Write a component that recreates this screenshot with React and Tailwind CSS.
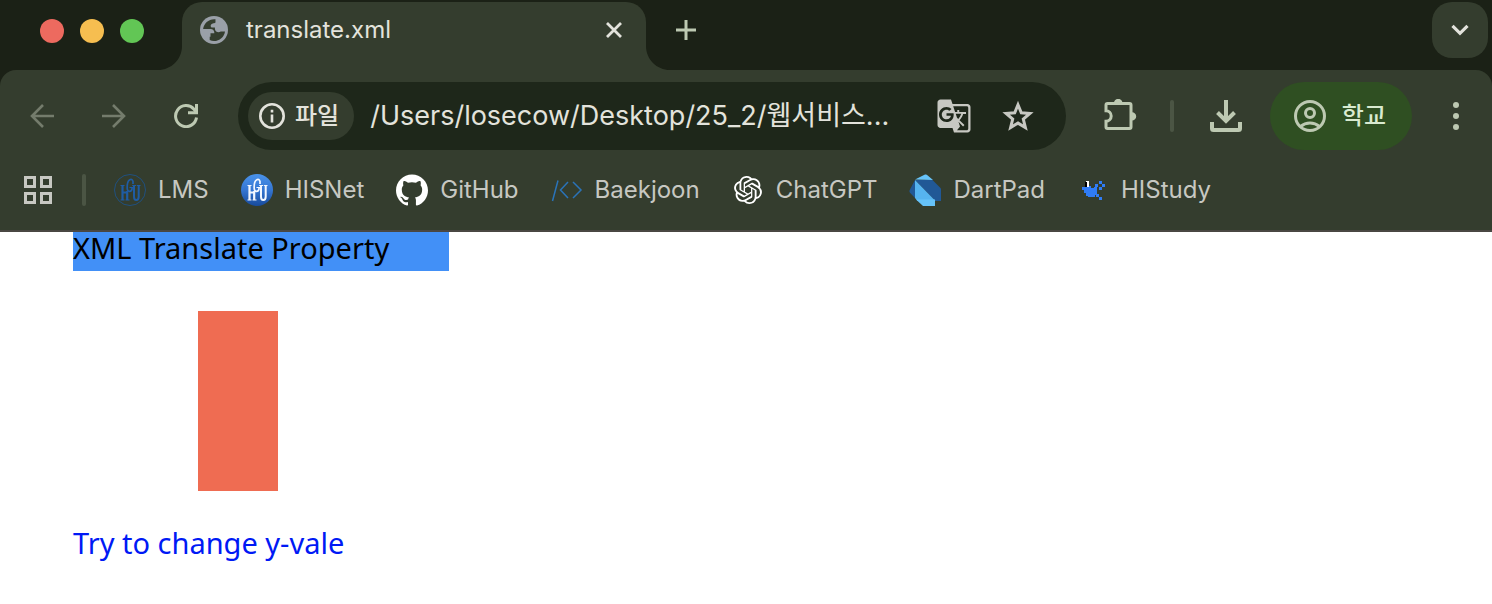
import { useState } from "react";
import { MdGTranslate } from "react-icons/md";
import { SiGithub, SiOpenai } from "react-icons/si";

function TabFoot({ flip }) {
  return (
    <svg
      viewBox="0 0 24 24"
      aria-hidden="true"
      className={
        flip
          ? "absolute bottom-0 left-full h-6 w-6 -scale-x-100 text-[#343d2e]"
          : "absolute right-full bottom-0 h-6 w-6 text-[#343d2e]"
      }
    >
      <path d="M24 0v24H0C13.3 24 24 13.3 24 0z" fill="currentColor" />
    </svg>
  );
}

function GlobeIcon() {
  return (
    <svg viewBox="0 0 28 28" className="h-7 w-7 shrink-0" aria-hidden="true">
      <circle cx="14" cy="14" r="14" fill="#9aa0a8" />
      <path
        d="M15.500 3.200C9 2.500 4 7 3.100 13h7.400c2.400 0 3.800 1.500 3.800 3.600v.6h-3.800v3.600h-.8v3.300c1.400.6 2.800.9 4.300.9 5.600 0 10.300-4.100 11-9.600h-4.200c-1.400.9-3 1-4.200.3-1.500-.9-1.700-2.400-1.700-4.200h-2.600c-1.700 0-2.200-2.500-.6-3.600 1.300-.9 3.800-.2 3.800-1.900 0-1-.1-1.900 0-2.800z"
        fill="#343d2e"
      />
    </svg>
  );
}

function HguLetters({ color }) {
  return (
    <g fill="none" stroke={color}>
      <path d="M8.500 11.500V26M13.200 17v9M8.500 18.500h4.700" strokeWidth="2.200" />
      <path d="M6.500 11.500h4M6.500 26h4M11.500 26h4" strokeWidth="1.200" />
      <path d="M19 10V7.500C18.500 5.500 17 5 15.800 5.800 13.500 7 13 11 13.200 14.500c.2 3.500 4 4 4.800.5V13" strokeWidth="1.700" />
      <path d="M15.500 13.500h4M18.200 11.500h4M23 11.500h3.500" strokeWidth="1.200" />
      <path d="M20 12v10.500c0 2.500.6 3.500 2.300 3.500 1.800 0 2.400-1.200 2.400-3.500V12" strokeWidth="2" />
    </g>
  );
}

function LmsIcon() {
  return (
    <svg viewBox="0 0 32 32" className="h-8 w-8" aria-hidden="true">
      <circle cx="16" cy="16" r="15.500" fill="none" stroke="#20507f" strokeWidth="1" />
      <HguLetters color="#1f5ca3" />
    </svg>
  );
}

function HisnetIcon() {
  return (
    <svg viewBox="0 0 32 32" className="h-8 w-8" aria-hidden="true">
      <defs>
        <linearGradient id="hisnet" x1="0" y1="0" x2="0" y2="1">
          <stop offset="0" stopColor="#4a93ea" />
          <stop offset="0.500" stopColor="#3576d2" />
          <stop offset="1" stopColor="#174a9b" />
        </linearGradient>
      </defs>
      <circle cx="16" cy="16" r="16" fill="url(#hisnet)" />
      <HguLetters color="#f2f7ff" />
    </svg>
  );
}

function BaekjoonIcon() {
  return (
    <svg viewBox="0 0 32 32" className="h-8 w-8" fill="none" stroke="#2a73b8" strokeWidth="1.500" aria-hidden="true">
      <path d="M7 6.500L1.500 27M17 8l-7.500 8 7.500 8M22 8l8 8-8 8" />
    </svg>
  );
}

function DartIcon() {
  return (
    <svg viewBox="0 0 32 32" className="h-8 w-8" aria-hidden="true">
      <path d="M6 5.500L15.500.8c1.200-.6 2.300-.3 3.200.6L24 6z" fill="#66c3f9" />
      <path d="M6 6L.7 16c-.5 1-.3 2.200.5 3L6 24z" fill="#215896" />
      <path d="M6 6h17.500L32 14.500V27h-5.500z" fill="#215896" />
      <path d="M6 6l20.500 21H8.500L6 24z" fill="#56b4f0" />
      <path d="M7 25.500h19V32H14z" fill="#66c3f9" />
    </svg>
  );
}

function HistudyIcon() {
  return (
    <svg viewBox="0 0 32 32" className="h-8 w-8" shapeRendering="crispEdges" aria-hidden="true">
      <path
        d="M5 13h6v-1h3v2h3v1h3v6h-2v2h-7v-1H9v-3H7v-3H5zM22 7h3v3h-3zM18 10h3v3h-3zM25 10h3v3h-3zM22 13h3v3h-3zM17 13h3v3h-3zM22 23h3v3h-3zM19 20h3v3h-3z"
        fill="#2f7cf6"
      />
      <path d="M9 7h3v6H9z" fill="#fff" />
      <path d="M8 8h2v5H8z" fill="#000" />
    </svg>
  );
}

function IconButton({ label, className, children }) {
  return (
    <button type="button" aria-label={label} className={`flex h-12 w-12 shrink-0 items-center justify-center rounded-full ${className}`}>
      {children}
    </button>
  );
}

const bookmarks = [
  { name: "LMS", icon: <LmsIcon /> },
  { name: "HISNet", icon: <HisnetIcon /> },
  { name: "GitHub", icon: <SiGithub className="h-8 w-8 text-white" /> },
  { name: "Baekjoon", icon: <BaekjoonIcon /> },
  { name: "ChatGPT", icon: <SiOpenai className="m-0.5 h-7 w-7 text-white" /> },
  { name: "DartPad", icon: <DartIcon /> },
  { name: "HIStudy", icon: <HistudyIcon /> },
];

function TabStrip() {
  return (
    <div className="flex h-[70px] items-start bg-[#1b2116] pr-1">
      <div className="flex gap-4 pt-[19px] pl-10">
        <button type="button" aria-label="Close window" className="h-6 w-6 rounded-full bg-[#ed6a5f]" />
        <button type="button" aria-label="Minimize window" className="h-6 w-6 rounded-full bg-[#f6be50]" />
        <button type="button" aria-label="Zoom window" className="h-6 w-6 rounded-full bg-[#62c655]" />
      </div>
      <div className="relative mt-0.5 ml-[38px] flex h-[68px] w-[464px] items-start rounded-t-[20px] bg-[#343d2e] pr-5 pl-[18px]">
        <TabFoot />
        <TabFoot flip />
        <div className="flex h-14 flex-1 items-center gap-[18px]">
          <GlobeIcon />
          <span className="flex-1 text-2xl text-[#e3e3dc]">translate.xml</span>
          <button type="button" aria-label="Close tab" className="flex h-6 w-6 items-center justify-center">
            <svg viewBox="0 0 16 16" className="h-4 w-4" stroke="#e3e3dc" strokeWidth="2.800" aria-hidden="true">
              <path d="M1 1l14 14M15 1L1 15" />
            </svg>
          </button>
        </div>
      </div>
      <button type="button" aria-label="New tab" className="mt-0.5 ml-3 flex h-14 w-14 items-center justify-center">
        <svg viewBox="0 0 20 20" className="h-5 w-5" stroke="#bdc9b2" strokeWidth="3" aria-hidden="true">
          <path d="M10 0v20M0 10h20" />
        </svg>
      </button>
      <button type="button" aria-label="Search tabs" className="mt-0.5 ml-auto flex h-14 w-14 items-center justify-center rounded-[20px] bg-[#343d2e]">
        <svg viewBox="0 0 18 12" className="h-3 w-[18px]" fill="none" stroke="#e3e3dc" strokeWidth="3.200" aria-hidden="true">
          <path d="M1.500 1.800L9 9.300l7.500-7.500" />
        </svg>
      </button>
    </div>
  );
}

function AddressBar() {
  const [url, setUrl] = useState("/Users/losecow/Desktop/25_2/웹서비스...");
  return (
    <div className="ml-7 flex h-[68px] min-w-0 flex-1 items-center rounded-full bg-[#1e271a] pr-6 pl-2.5">
      <button type="button" className="flex h-12 shrink-0 items-center gap-2.5 rounded-full bg-[#343d2e] pr-[15px] pl-[11px] text-2xl font-medium text-[#e3e3dc]">
        <svg viewBox="0 0 26 26" className="h-[26px] w-[26px]" aria-hidden="true">
          <circle cx="13" cy="13" r="11.700" fill="none" stroke="#e3e3dc" strokeWidth="2.600" />
          <path d="M11.700 11.500h2.600v8h-2.600zM11.700 6.800h2.600v2.600h-2.600z" fill="#e3e3dc" />
        </svg>
        파일
      </button>
      <input
        type="text"
        aria-label="Address"
        value={url}
        onChange={(e) => setUrl(e.target.value)}
        className="ml-4 min-w-0 flex-1 bg-transparent text-[27px] text-[#e3e3dc] outline-none"
      />
      <div className="flex gap-4">
        <IconButton label="Translate this page" className="text-[#c7c8c2]">
          <MdGTranslate className="h-9 w-9" />
        </IconButton>
        <IconButton label="Bookmark this tab" className="text-[#c7c8c2]">
          <svg viewBox="0 0 32 32" className="h-8 w-8" fill="none" stroke="currentColor" strokeWidth="3" aria-hidden="true">
            <path d="M16 4.800l3.300 8 8.600.7-6.600 5.600 2.100 8.500L16 23.100l-7.400 4.500 2.100-8.500-6.600-5.600 8.600-.7z" />
          </svg>
        </IconButton>
      </div>
    </div>
  );
}

function Toolbar() {
  return (
    <div className="flex h-[92px] items-center pr-3 pl-[18px]">
      <div className="flex gap-6">
        <IconButton label="Back" className="text-[#747c6c]">
          <svg viewBox="0 0 24 24" className="h-6 w-6" fill="none" stroke="currentColor" strokeWidth="2.600" aria-hidden="true">
            <path d="M24 12H2M13 1L2 12l11 11" />
          </svg>
        </IconButton>
        <IconButton label="Forward" className="text-[#747c6c]">
          <svg viewBox="0 0 24 24" className="h-6 w-6" fill="none" stroke="currentColor" strokeWidth="2.600" aria-hidden="true">
            <path d="M0 12h22M11 1l11 11-11 11" />
          </svg>
        </IconButton>
        <IconButton label="Reload" className="text-[#bdc9b2]">
          <svg viewBox="0 0 24 24" className="h-6 w-6" fill="none" stroke="currentColor" strokeWidth="3" aria-hidden="true">
            <path d="M22.500 13.500A10.500 10.500 0 1 1 20 5.200l2.500 3" />
            <path d="M22.500 0v8.700H14" />
          </svg>
        </IconButton>
      </div>
      <AddressBar />
      <IconButton label="Extensions" className="ml-[30px] text-[#bdc9b2]">
        <svg viewBox="0 0 34 34" className="h-[34px] w-[34px]" aria-hidden="true">
          <path
            d="M5.500 5.500h22a1.500 1.500 0 0 1 1.500 1.500v22a1.500 1.500 0 0 1-1.500 1.500h-22A1.500 1.500 0 0 1 4 29v-5.800a5.200 5.200 0 0 0 0-10.400V7a1.500 1.500 0 0 1 1.500-1.500z"
            transform="translate(-1 -1)"
            fill="none"
            stroke="currentColor"
            strokeWidth="3"
          />
          <path d="M11 4a4.200 4.200 0 0 1 8.400 0zM29 13.200a4.200 4.200 0 0 1 0 8.400z" fill="currentColor" />
        </svg>
      </IconButton>
      <div className="ml-[26px] h-8 w-1 rounded-full bg-[#4b5544]" />
      <IconButton label="Downloads" className="ml-7 text-[#bdc9b2]">
        <svg viewBox="0 0 32 32" className="h-8 w-8" fill="none" stroke="currentColor" strokeWidth="4" aria-hidden="true">
          <path d="M16 0v21M7.500 12.500L16 21l8.500-8.500M2 22v6.500a1.500 1.500 0 0 0 1.500 1.500h25a1.500 1.500 0 0 0 1.500-1.500V22" />
        </svg>
      </IconButton>
      <button type="button" className="ml-5 flex h-[68px] shrink-0 items-center gap-4 rounded-full bg-[#2f4f22] pr-[26px] pl-6 text-2xl font-medium text-[#d9ead0]">
        <svg viewBox="0 0 32 32" className="h-8 w-8" fill="none" stroke="#bdc9b2" strokeWidth="3" aria-hidden="true">
          <circle cx="16" cy="16" r="14.500" />
          <circle cx="16" cy="13" r="4.500" />
          <path d="M6.500 26.500c5.500-4.600 13.500-4.600 19 0" />
        </svg>
        학교
      </button>
      <IconButton label="Menu" className="ml-5 text-[#bdc9b2]">
        <svg viewBox="0 0 6 28" className="h-7 w-1.5" fill="currentColor" aria-hidden="true">
          <circle cx="3" cy="3" r="3" />
          <circle cx="3" cy="14" r="3" />
          <circle cx="3" cy="25" r="3" />
        </svg>
      </IconButton>
    </div>
  );
}

function BookmarksBar() {
  return (
    <nav aria-label="Bookmarks" className="flex h-[68px] items-center pb-3 pl-6 text-2xl text-[#c7c8c2]">
      <button type="button" aria-label="Apps">
        <svg viewBox="0 0 28 28" className="h-7 w-7" fill="none" stroke="currentColor" strokeWidth="3" aria-hidden="true">
          <path d="M1.500 1.500h9v9h-9zM17.500 1.500h9v9h-9zM1.500 17.500h9v9h-9zM17.500 17.500h9v9h-9z" />
        </svg>
      </button>
      <div className="ml-[30px] h-8 w-1 rounded-full bg-[#4b5544]" />
      <div className="ml-7 flex gap-8">
        {bookmarks.map((b) => (
          <a key={b.name} href="#" className="flex items-center gap-3">
            {b.icon}
            <span>{b.name}</span>
          </a>
        ))}
      </div>
    </nav>
  );
}

export default function App() {
  return (
    <div className="min-h-screen bg-white font-['Inter','Noto_Sans_CJK_KR',sans-serif]">
      <header className="border-b-2 border-[#4a4743] bg-[#1b2116]">
        <TabStrip />
        <div className="rounded-t-2xl bg-[#343d2e]">
          <Toolbar />
          <BookmarksBar />
        </div>
      </header>
      <main className="pl-[73px] font-['Noto_Sans',sans-serif] text-[29px] leading-8">
        <h1 className="h-[39px] w-[376px] bg-[#4290f7] text-black">XML Translate Property</h1>
        <div className="mt-10 ml-[125px] h-[180px] w-20 bg-[#ef6c52]" />
        <p className="mt-9 text-[#0019f5]">Try to change y-vale</p>
      </main>
    </div>
  );
}
